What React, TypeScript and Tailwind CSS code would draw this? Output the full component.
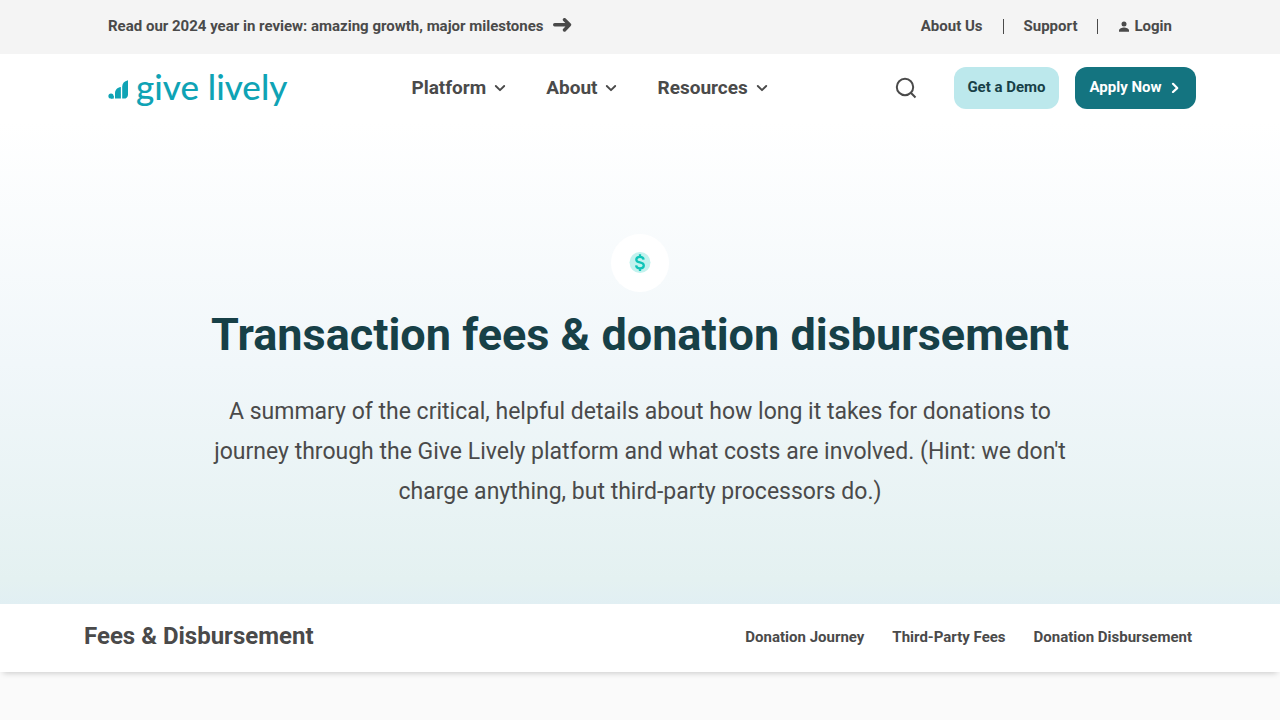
import React from 'react';

interface MenuItem {
    label: string;
}

const menuItems: MenuItem[] = [{ label: 'Platform' }, { label: 'About' }, { label: 'Resources' }];
const pageLinks = ['Donation Journey', 'Third-Party Fees', 'Donation Disbursement'];

const ArrowIcon = () => (
    <svg className="w-5 h-4" viewBox="0 0 20 16" fill="none" stroke="currentColor" strokeWidth="3.4" strokeLinecap="round" strokeLinejoin="round" aria-hidden="true">
        <path d="M2.7 6.8H17M12.5 1.7L17.5 6.8L12.5 12" />
    </svg>
);

const ChevronDownIcon = () => (
    <svg className="w-3 h-3" viewBox="0 0 12 12" fill="none" stroke="currentColor" strokeWidth="1.9" strokeLinecap="round" strokeLinejoin="round" aria-hidden="true">
        <path d="M1.8 4L6 8.2L10.2 4" />
    </svg>
);

const ChevronRightIcon = () => (
    <svg className="w-3 h-3" viewBox="0 0 12 12" fill="none" stroke="currentColor" strokeWidth="2.2" strokeLinecap="round" strokeLinejoin="round" aria-hidden="true">
        <path d="M3 2.8L7.2 7.1L3 11" />
    </svg>
);

const UserIcon = () => (
    <svg className="w-3 h-3" viewBox="0 0 12 12" fill="currentColor" aria-hidden="true">
        <circle cx="6" cy="3.9" r="2.5" />
        <path d="M1 11.8V10.4C1 8.7 4 7.6 6 7.6S11 8.7 11 10.4V11.8Z" />
    </svg>
);

const SearchIcon = () => (
    <svg className="w-6 h-6" viewBox="0 0 24 24" fill="none" stroke="currentColor" strokeWidth="2" aria-hidden="true">
        <circle cx="11" cy="11" r="8.2" />
        <path d="M16.8 16.8L21.5 21.5" />
    </svg>
);

const LogoMark = () => (
    <svg className="w-5 h-6" viewBox="0 0 20 24" fill="currentColor" aria-hidden="true">
        <circle cx="3" cy="20" r="2.6" />
        <path d="M3 20H5.8V22.6H3Z" />
        <path d="M7 22.6V17.4C7 13.8 9.2 11.4 12.9 11V22.6Z" />
        <path d="M14.2 22.6V10.6C14.2 7.4 16.2 5.2 20 4.2V18.4C20 21 18.4 22.6 15.8 22.6Z" />
    </svg>
);

const DollarIcon = () => (
    <svg className="w-6 h-6" viewBox="0 0 24 24" fill="none" aria-hidden="true">
        <circle cx="12" cy="11.5" r="10.5" fill="#c2f2ee" />
        <path d="M15.6 8.6C15.4 6.9 14 5.9 12 5.9S8.3 7 8.3 8.7C8.3 12.7 15.8 10.2 15.8 14.4C15.8 16.2 14.3 17.3 12 17.3S8.3 16.2 8.1 14.4M12 3.2V5.9M12 17.3V20" stroke="#0fc4b8" strokeWidth="2.3" />
    </svg>
);

const TopBar = () => (
    <div className="bg-[#f4f4f4]">
        <div className="flex items-center justify-between h-[54px] px-[108px] pb-0.5 text-[15px] font-bold">
            <a href="#review" className="flex items-center gap-2">
                Read our 2024 year in review: amazing growth, major milestones
                <ArrowIcon />
            </a>
            <nav className="flex items-center gap-5" aria-label="Account">
                <a href="#about-us">About Us</a>
                <span className="w-px h-[15px] bg-[#4a4a4a]" />
                <a href="#support">Support</a>
                <span className="w-px h-[15px] bg-[#4a4a4a]" />
                <a href="#login" className="flex items-center gap-1">
                    <UserIcon />
                    Login
                </a>
            </nav>
        </div>
    </div>
);

const Header = () => (
    <header className="flex items-center justify-between h-[68px] pl-[108px] pr-[84px]">
        <div className="flex items-center gap-[124px]">
            <a href="#home" className="flex items-center gap-2 text-[#0fa3b5]">
                <LogoMark />
                <span className="font-[Lato,sans-serif] font-medium text-[35px] leading-10 pb-1">give lively</span>
            </a>
            <nav className="flex items-center gap-10" aria-label="Main">
                {menuItems.map((item) => (
                    <button key={item.label} type="button" className="flex items-center gap-2 text-[19px] font-bold">
                        {item.label}
                        <ChevronDownIcon />
                    </button>
                ))}
            </nav>
        </div>
        <div className="flex items-center gap-4">
            <button type="button" aria-label="Search" className="mr-5">
                <SearchIcon />
            </button>
            <a href="#demo" className="flex items-center justify-center h-[42px] w-[105px] pb-0.5 rounded-xl bg-[#bce8ec] text-[#174047] text-[15px] font-bold">
                Get a Demo
            </a>
            <a href="#apply" className="flex items-center justify-center gap-2 h-[42px] w-[121px] pb-0.5 rounded-xl bg-[#147480] text-white text-[15px] font-bold">
                Apply Now
                <ChevronRightIcon />
            </a>
        </div>
    </header>
);

const Hero = () => (
    <section className="flex flex-col items-center px-[200px] pt-28 pb-[92px] text-center bg-[linear-gradient(180deg,#ffffff_0%,#f1f7fa_50%,#e4f1f1_95%,#e1eff3_100%)]">
        <div className="flex items-center justify-center w-[58px] h-[58px] rounded-full bg-white">
            <DollarIcon />
        </div>
        <h1 className="mt-[13px] text-[45px] leading-[60px] font-bold text-[#174047]">
            Transaction fees &amp; donation disbursement
        </h1>
        <p className="mt-[27px] text-[23px] leading-10">
            A summary of the critical, helpful details about how long it takes for donations to
            <br />
            journey through the Give Lively platform and what costs are involved. (Hint: we don't
            <br />
            charge anything, but third-party processors do.)
        </p>
    </section>
);

const PageNav = () => (
    <div className="flex items-center justify-between h-[68px] pl-[84px] pr-[88px] bg-white shadow-[0_4px_6px_-3px_rgba(0,0,0,0.2)]">
        <h2 className="pb-1 text-2xl font-bold">Fees &amp; Disbursement</h2>
        <nav className="flex items-center gap-7 pb-0.5 text-[15px] font-bold" aria-label="On this page">
            {pageLinks.map((link) => (
                <a key={link} href="#section">{link}</a>
            ))}
        </nav>
    </div>
);

const App: React.FC = () => {
    return (
        <div className="min-h-screen bg-[#fafafa] font-[Roboto,sans-serif] text-[#4a4a4a]">
            <TopBar />
            <div className="bg-white">
                <Header />
            </div>
            <main>
                <Hero />
                <PageNav />
            </main>
        </div>
    );
};

export default App;
